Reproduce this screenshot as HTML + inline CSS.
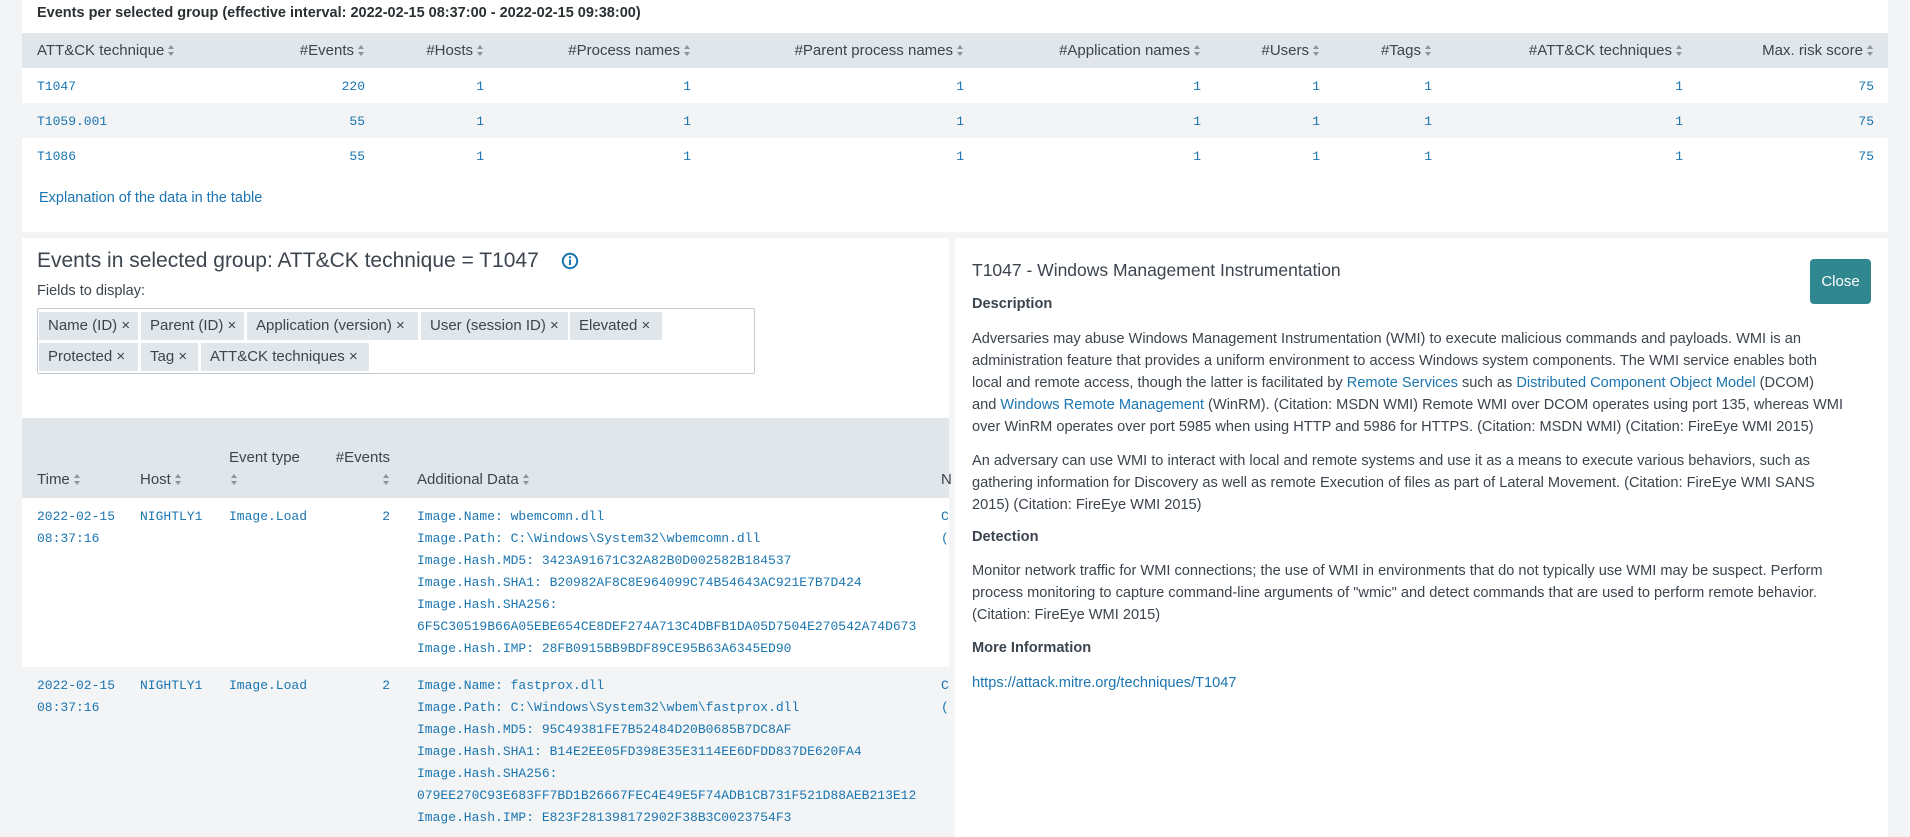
<!DOCTYPE html>
<html><head><meta charset="utf-8"><style>
*{margin:0;padding:0;box-sizing:border-box}
body{width:1910px;height:837px;overflow:hidden;background:#f2f4f5;font-family:"Liberation Sans",sans-serif;color:#3c444d;position:relative}
.abs{position:absolute;white-space:nowrap}
.card{position:absolute;background:#fff}
.mono{font-family:"Liberation Mono",monospace;font-size:13px;color:#1a75b0}
.lnk{color:#1a75b0}
.hdr{font-size:15px;color:#3c444d}
.s{display:inline-block;width:7px;height:11px;margin-left:4px;vertical-align:-1px;position:relative}
.s:before{content:"";position:absolute;left:0;top:0;border-left:3.5px solid transparent;border-right:3.5px solid transparent;border-bottom:4px solid #8a949d}
.s:after{content:"";position:absolute;left:0;bottom:0;border-left:3.5px solid transparent;border-right:3.5px solid transparent;border-top:4px solid #8a949d}
.r{text-align:right}
.tag{position:absolute;height:28px;background:#e1e6eb;font-size:15px;line-height:28px;padding-left:9px;white-space:nowrap;color:#3c444d}
.p{position:absolute;left:17px;font-size:14.6px;line-height:22px;white-space:nowrap;color:#3c444d}
.b{position:absolute;left:17px;font-size:14.6px;font-weight:bold;white-space:nowrap}
</style></head><body>

<div class="card" style="left:22px;top:0;width:1866px;height:232px">
  <div class="abs" style="left:15px;top:5px;font-size:14.5px;font-weight:bold;color:#2b3033">Events per selected group (effective interval: 2022-02-15 08:37:00 - 2022-02-15 09:38:00)</div>
  <div style="position:absolute;left:0;top:33px;width:1866px;height:35px;background:#e1e6eb"></div>
  <div style="position:absolute;left:0;top:103px;width:1866px;height:35px;background:#f2f4f5"></div>
  <div class="abs hdr" style="left:15px;top:42px">ATT&amp;CK technique<span class="s"></span></div>
</div>

<div class="abs hdr r" style="right:1545px;top:42px">#Events<span class="s"></span></div>
<div class="abs hdr r" style="right:1426px;top:42px">#Hosts<span class="s"></span></div>
<div class="abs hdr r" style="right:1219px;top:42px">#Process names<span class="s"></span></div>
<div class="abs hdr r" style="right:946px;top:42px">#Parent process names<span class="s"></span></div>
<div class="abs hdr r" style="right:709px;top:42px">#Application names<span class="s"></span></div>
<div class="abs hdr r" style="right:590px;top:42px">#Users<span class="s"></span></div>
<div class="abs hdr r" style="right:478px;top:42px">#Tags<span class="s"></span></div>
<div class="abs hdr r" style="right:227px;top:42px">#ATT&amp;CK techniques<span class="s"></span></div>
<div class="abs hdr r" style="right:36px;top:42px">Max. risk score<span class="s"></span></div>

<div class="abs mono" style="left:37px;top:79px">T1047</div>
<div class="abs mono" style="left:37px;top:114px">T1059.001</div>
<div class="abs mono" style="left:37px;top:149px">T1086</div>
<div class="abs mono r" style="right:1545px;top:79px">220</div>
<div class="abs mono r" style="right:1545px;top:114px">55</div>
<div class="abs mono r" style="right:1545px;top:149px">55</div>
<div class="abs mono r" style="right:1426px;top:69px;line-height:35px">1<br>1<br>1</div>
<div class="abs mono r" style="right:1219px;top:69px;line-height:35px">1<br>1<br>1</div>
<div class="abs mono r" style="right:946px;top:69px;line-height:35px">1<br>1<br>1</div>
<div class="abs mono r" style="right:709px;top:69px;line-height:35px">1<br>1<br>1</div>
<div class="abs mono r" style="right:590px;top:69px;line-height:35px">1<br>1<br>1</div>
<div class="abs mono r" style="right:478px;top:69px;line-height:35px">1<br>1<br>1</div>
<div class="abs mono r" style="right:227px;top:69px;line-height:35px">1<br>1<br>1</div>
<div class="abs mono r" style="right:36px;top:69px;line-height:35px">75<br>75<br>75</div>
<div class="abs lnk" style="left:39px;top:190px;font-size:14.5px">Explanation of the data in the table</div>

<div class="card" style="left:22px;top:238px;width:927px;height:599px">
  <div class="abs" style="left:15px;top:11px;font-size:21px;color:#3c444d">Events in selected group: ATT&amp;CK technique = T1047</div>
  <svg class="abs" style="left:539px;top:14px" width="18" height="18" viewBox="0 0 18 18"><circle cx="9" cy="9" r="7.2" fill="none" stroke="#1a75b0" stroke-width="2"/><rect x="8" y="7.5" width="2" height="5.5" fill="#1a75b0"/><circle cx="9" cy="5.3" r="1.2" fill="#1a75b0"/></svg>
  <div class="abs" style="left:15px;top:45px;font-size:14.5px">Fields to display:</div>
  <div style="position:absolute;left:15px;top:70px;width:718px;height:66px;border:1px solid #c3cbd4;border-radius:2px"></div>
  <div style="position:absolute;left:0;top:180px;width:927px;height:80px;background:#e1e6eb"></div>
  <div style="position:absolute;left:0;top:429px;width:927px;height:170px;background:#f2f4f5"></div>
</div>
<div class="tag" style="left:39px;top:312px;width:99px">Name (ID) ×</div>
<div class="tag" style="left:141px;top:312px;width:103px">Parent (ID) ×</div>
<div class="tag" style="left:247px;top:312px;width:171px">Application (version) ×</div>
<div class="tag" style="left:421px;top:312px;width:147px">User (session ID) ×</div>
<div class="tag" style="left:570px;top:312px;width:92px">Elevated ×</div>
<div class="tag" style="left:39px;top:343px;width:99px">Protected ×</div>
<div class="tag" style="left:141px;top:343px;width:57px">Tag ×</div>
<div class="tag" style="left:201px;top:343px;width:168px">ATT&amp;CK techniques ×</div>

<div class="abs hdr" style="left:37px;top:471px">Time<span class="s"></span></div>
<div class="abs hdr" style="left:140px;top:471px">Host<span class="s"></span></div>
<div class="abs hdr" style="left:229px;top:449px">Event type</div>
<div class="abs hdr" style="left:231px;top:471px"><span class="s" style="margin:0"></span></div>
<div class="abs hdr r" style="right:1520px;top:449px">#Events</div>
<div class="abs hdr r" style="right:1520px;top:471px"><span class="s" style="margin:0"></span></div>
<div class="abs hdr" style="left:417px;top:471px">Additional Data<span class="s"></span></div>
<div class="abs hdr" style="left:941px;top:471px">N</div>

<div class="abs mono" style="left:37px;top:506px;line-height:22px">2022-02-15<br>08:37:16</div>
<div class="abs mono" style="left:140px;top:506px;line-height:22px">NIGHTLY1</div>
<div class="abs mono" style="left:229px;top:506px;line-height:22px">Image.Load</div>
<div class="abs mono r" style="right:1520px;top:506px;line-height:22px">2</div>
<div class="abs mono" style="left:417px;top:506px;line-height:22px">Image.Name: wbemcomn.dll<br>Image.Path: C:\Windows\System32\wbemcomn.dll<br>Image.Hash.MD5: 3423A91671C32A82B0D002582B184537<br>Image.Hash.SHA1: B20982AF8C8E964099C74B54643AC921E7B7D424<br>Image.Hash.SHA256:<br>6F5C30519B66A05EBE654CE8DEF274A713C4DBFB1DA05D7504E270542A74D673<br>Image.Hash.IMP: 28FB0915BB9BDF89CE95B63A6345ED90</div>
<div class="abs mono" style="left:941px;top:506px;line-height:22px;width:8px;overflow:hidden">C<br>(</div>

<div class="abs mono" style="left:37px;top:675px;line-height:22px">2022-02-15<br>08:37:16</div>
<div class="abs mono" style="left:140px;top:675px;line-height:22px">NIGHTLY1</div>
<div class="abs mono" style="left:229px;top:675px;line-height:22px">Image.Load</div>
<div class="abs mono r" style="right:1520px;top:675px;line-height:22px">2</div>
<div class="abs mono" style="left:417px;top:675px;line-height:22px">Image.Name: fastprox.dll<br>Image.Path: C:\Windows\System32\wbem\fastprox.dll<br>Image.Hash.MD5: 95C49381FE7B52484D20B0685B7DC8AF<br>Image.Hash.SHA1: B14E2EE05FD398E35E3114EE6DFDD837DE620FA4<br>Image.Hash.SHA256:<br>079EE270C93E683FF7BD1B26667FEC4E49E5F74ADB1CB731F521D88AEB213E12<br>Image.Hash.IMP: E823F281398172902F38B3C0023754F3</div>
<div class="abs mono" style="left:941px;top:675px;line-height:22px;width:8px;overflow:hidden">C<br>(</div>

<div class="card" style="left:955px;top:238px;width:933px;height:599px">
  <div class="abs" style="left:17px;top:22px;font-size:17.5px;color:#3c444d">T1047 - Windows Management Instrumentation</div>
  <div style="position:absolute;left:855px;top:21px;width:61px;height:45px;background:#31878f;border-radius:4px;color:#fff;font-size:15px;line-height:45px;text-align:center">Close</div>
  <div class="b" style="top:58px">Description</div>
  <div class="p" style="top:90px">Adversaries may abuse Windows Management Instrumentation (WMI) to execute malicious commands and payloads. WMI is an<br>administration feature that provides a uniform environment to access Windows system components. The WMI service enables both<br>local and remote access, though the latter is facilitated by <span class="lnk">Remote Services</span> such as <span class="lnk">Distributed Component Object Model</span> (DCOM)<br>and <span class="lnk">Windows Remote Management</span> (WinRM). (Citation: MSDN WMI) Remote WMI over DCOM operates using port 135, whereas WMI<br>over WinRM operates over port 5985 when using HTTP and 5986 for HTTPS. (Citation: MSDN WMI) (Citation: FireEye WMI 2015)</div>
  <div class="p" style="top:212px">An adversary can use WMI to interact with local and remote systems and use it as a means to execute various behaviors, such as<br>gathering information for Discovery as well as remote Execution of files as part of Lateral Movement. (Citation: FireEye WMI SANS<br>2015) (Citation: FireEye WMI 2015)</div>
  <div class="b" style="top:291px">Detection</div>
  <div class="p" style="top:322px">Monitor network traffic for WMI connections; the use of WMI in environments that do not typically use WMI may be suspect. Perform<br>process monitoring to capture command-line arguments of "wmic" and detect commands that are used to perform remote behavior.<br>(Citation: FireEye WMI 2015)</div>
  <div class="b" style="top:402px">More Information</div>
  <div class="p lnk" style="top:434px;color:#1a75b0">https://attack.mitre.org/techniques/T1047</div>
</div>
</body></html>
